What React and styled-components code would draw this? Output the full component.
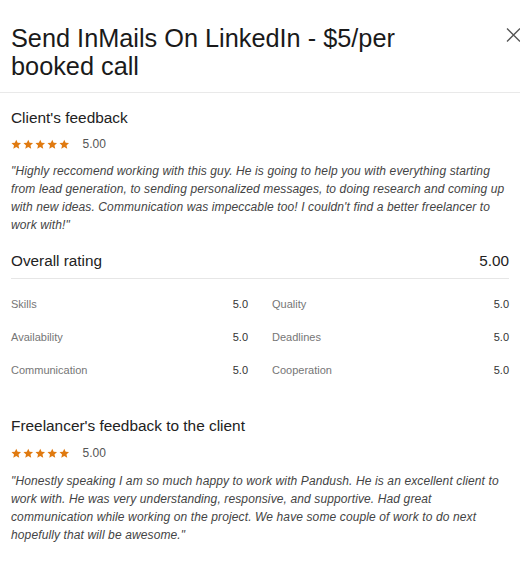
import React from "react";
import styled, { createGlobalStyle } from "styled-components";

const Global = createGlobalStyle`
  html, body { margin: 0; padding: 0; background: #fff; }
  body { font-family: "Liberation Sans", Arial, sans-serif; color: #222; }
  * { box-sizing: border-box; }
`;

const Modal = styled.div`
  width: 520px;
  background: #fff;
`;

const Header = styled.header`
  display: flex;
  justify-content: space-between;
  align-items: flex-start;
  padding: 24px 0 12px 11px;
  border-bottom: 1px solid #e9e9e9;
`;

const Title = styled.h2`
  margin: 0;
  font-size: 25.3px;
  line-height: 28px;
  font-weight: 400;
  color: #1a1a1a;
  max-width: 420px;
`;

const Close = styled.button`
  border: 0;
  background: none;
  padding: 0;
  margin-top: 3px;
  width: 14px;
  height: 16px;
  display: flex;
  color: #555;
  cursor: pointer;
`;

const Body = styled.div`
  padding: 0 11px;
`;

const SectionTitle = styled.h3`
  margin: ${(p) => p.$top}px 0 0;
  font-size: 15.4px;
  line-height: 20px;
  font-weight: 400;
  color: #222;
`;

const StarRow = styled.div`
  display: flex;
  align-items: center;
  height: 16px;
  margin-top: ${(p) => p.$top}px;
  gap: 13px;
`;

const Stars = styled.div`
  display: flex;
  gap: 1.5px;
  color: #e07a10;
`;

const Score = styled.span`
  font-size: 12px;
  color: #555;
`;

const Quote = styled.p`
  margin: ${(p) => p.$top}px 0 0;
  font-size: 12px;
  letter-spacing: 0.12px;
  line-height: 18px;
  font-style: italic;
  color: #444;
`;

const OverallRow = styled.div`
  display: flex;
  justify-content: space-between;
  margin-top: 17px;
  padding-bottom: 7px;
  border-bottom: 1px solid #e6e6e6;
  font-size: 15.3px;
  line-height: 20px;
  color: #222;
`;

const Grid = styled.div`
  display: grid;
  grid-template-columns: 1fr 1fr;
  column-gap: 24px;
  row-gap: 17px;
  margin-top: 17px;
`;

const Metric = styled.div`
  display: flex;
  justify-content: space-between;
  font-size: 11px;
  line-height: 16px;
`;

const Label = styled.span`
  color: #767676;
`;

const Value = styled.span`
  color: #333;
`;

const Star = () => (
  <svg width="10.5" height="10.5" viewBox="0 0 24 24" fill="currentColor">
    <path d="M12 1.5l3.2 7.1 7.7.8-5.8 5.2 1.7 7.6L12 18.3l-6.8 3.9 1.7-7.6-5.8-5.2 7.7-.8z" />
  </svg>
);

const Rating = ({ top, value }) => (
  <StarRow $top={top}>
    <Stars>
      {[0, 1, 2, 3, 4].map((i) => (
        <Star key={i} />
      ))}
    </Stars>
    <Score>{value}</Score>
  </StarRow>
);

const metrics = [
  ["Skills", "5.0"],
  ["Quality", "5.0"],
  ["Availability", "5.0"],
  ["Deadlines", "5.0"],
  ["Communication", "5.0"],
  ["Cooperation", "5.0"],
];

export default function App() {
  return (
    <>
      <Global />
      <Modal>
        <Header>
          <Title>Send InMails On LinkedIn - $5/per booked call</Title>
          <Close aria-label="Close">
            <svg width="14" height="16" viewBox="0 0 14 16" fill="none" stroke="currentColor" strokeWidth="1.3">
              <path d="M1 1.5l13 13M14 1.5l-13 13" />
            </svg>
          </Close>
        </Header>
        <Body>
          <SectionTitle $top={15}>Client's feedback</SectionTitle>
          <Rating top={8} value="5.00" />
          <Quote $top={10}>
            "Highly reccomend working with this guy. He is going to help you with everything starting from lead
            generation, to sending personalized messages, to doing research and coming up with new ideas.
            Communication was impeccable too! I couldn't find a better freelancer to work with!"
          </Quote>
          <OverallRow>
            <span>Overall rating</span>
            <span>5.00</span>
          </OverallRow>
          <Grid>
            {metrics.map(([l, v]) => (
              <Metric key={l}>
                <Label>{l}</Label>
                <Value>{v}</Value>
              </Metric>
            ))}
          </Grid>
          <SectionTitle $top={38}>Freelancer's feedback to the client</SectionTitle>
          <Rating top={9} value="5.00" />
          <Quote $top={11}>
            "Honestly speaking I am so much happy to work with Pandush. He is an excellent client to work with. He
            was very understanding, responsive, and supportive. Had great communication while working on the
            project. We have some couple of work to do next hopefully that will be awesome."
          </Quote>
        </Body>
      </Modal>
    </>
  );
}
